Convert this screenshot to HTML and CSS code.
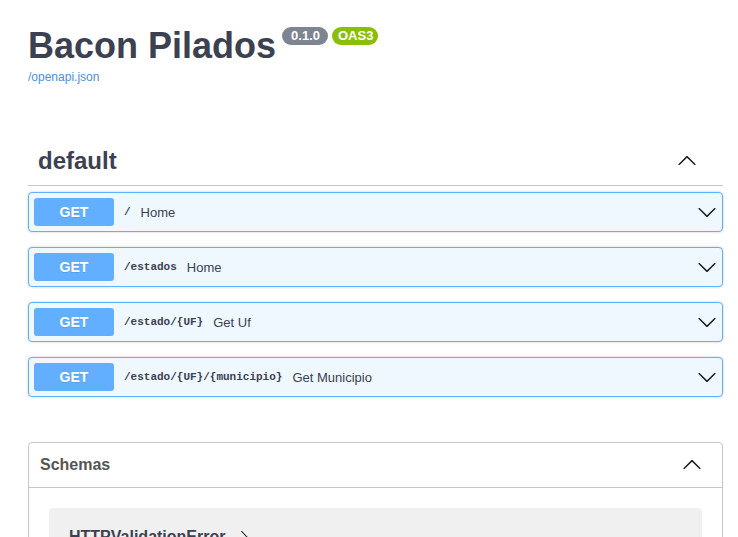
FILE: index.html
```html
<!DOCTYPE html>
<html lang="en">
<head>
<meta charset="utf-8">
<title>Bacon Pilados - Swagger UI</title>
<link rel="stylesheet" href="styles.css">
</head>
<body>
<div class="wrapper">
  <div class="info">
    <div class="title-row">
      <h2 class="title">Bacon Pilados</h2>
      <span class="badge badge-version">0.1.0</span>
      <span class="badge badge-oas">OAS3</span>
    </div>
    <a class="spec-link" href="#">/openapi.json</a>
  </div>

  <div class="tag-section">
    <h3 class="tag-heading">
      <span>default</span>
      <svg class="icon" width="20" height="20" viewBox="0 0 20 20"><path d="M2.582 13.891c-.272.268-.709.268-.979 0s-.271-.701 0-.969l7.908-7.83c.27-.268.707-.268.979 0l7.908 7.83c.27.268.27.701 0 .969-.271.268-.709.268-.979 0L10 6.75l-7.418 7.141z"/></svg>
    </h3>

    <div class="opblock">
      <span class="method">GET</span>
      <span class="path">/</span>
      <span class="desc">Home</span>
      <svg class="icon chevron" width="20" height="20" viewBox="0 0 20 20"><path d="M17.418 6.109c.272-.268.709-.268.979 0s.271.701 0 .969l-7.908 7.83c-.27.268-.707.268-.979 0l-7.908-7.83c-.27-.268-.27-.701 0-.969.271-.268.709-.268.979 0L10 13.25l7.418-7.141z"/></svg>
    </div>
    <div class="opblock">
      <span class="method">GET</span>
      <span class="path">/estados</span>
      <span class="desc">Home</span>
      <svg class="icon chevron" width="20" height="20" viewBox="0 0 20 20"><path d="M17.418 6.109c.272-.268.709-.268.979 0s.271.701 0 .969l-7.908 7.83c-.27.268-.707.268-.979 0l-7.908-7.83c-.27-.268-.27-.701 0-.969.271-.268.709-.268.979 0L10 13.25l7.418-7.141z"/></svg>
    </div>
    <div class="opblock">
      <span class="method">GET</span>
      <span class="path">/estado/{UF}</span>
      <span class="desc">Get Uf</span>
      <svg class="icon chevron" width="20" height="20" viewBox="0 0 20 20"><path d="M17.418 6.109c.272-.268.709-.268.979 0s.271.701 0 .969l-7.908 7.83c-.27.268-.707.268-.979 0l-7.908-7.83c-.27-.268-.27-.701 0-.969.271-.268.709-.268.979 0L10 13.25l7.418-7.141z"/></svg>
    </div>
    <div class="opblock">
      <span class="method">GET</span>
      <span class="path">/estado/{UF}/{municipio}</span>
      <span class="desc">Get Municipio</span>
      <svg class="icon chevron" width="20" height="20" viewBox="0 0 20 20"><path d="M17.418 6.109c.272-.268.709-.268.979 0s.271.701 0 .969l-7.908 7.83c-.27.268-.707.268-.979 0l-7.908-7.83c-.27-.268-.27-.701 0-.969.271-.268.709-.268.979 0L10 13.25l7.418-7.141z"/></svg>
    </div>
  </div>

  <section class="models">
    <h4 class="models-heading">
      <span>Schemas</span>
      <svg class="icon" width="20" height="20" viewBox="0 0 20 20"><path d="M2.582 13.891c-.272.268-.709.268-.979 0s-.271-.701 0-.969l7.908-7.83c.27-.268.707-.268.979 0l7.908 7.83c.27.268.27.701 0 .969-.271.268-.709.268-.979 0L10 6.75l-7.418 7.141z"/></svg>
    </h4>
    <div class="model-container">
      <span class="model-title">HTTPValidationError</span>
      <svg class="model-arrow" width="14" height="14" viewBox="0 0 20 20"><path d="M13.25 10L6.109 2.58c-.268-.27-.268-.707 0-.979.268-.27.701-.27.969 0l7.83 7.908c.268.271.268.709 0 .979l-7.83 7.908c-.268.271-.701.27-.969 0-.268-.269-.268-.707 0-.979L13.25 10z"/></svg>
    </div>
    <div class="model-container">
      <span class="model-title">ValidationError</span>
      <svg class="model-arrow" width="14" height="14" viewBox="0 0 20 20"><path d="M13.25 10L6.109 2.58c-.268-.27-.268-.707 0-.979.268-.27.701-.27.969 0l7.83 7.908c.268.271.268.709 0 .979l-7.830 7.908c-.268.271-.701.27-.969 0-.268-.269-.268-.707 0-.979L13.25 10z"/></svg>
    </div>
  </section>
</div>
</body>
</html>
```
FILE: styles.css
```css
* {
  box-sizing: border-box;
}

body {
  margin: 0;
  background: #ffffff;
  font-family: "Liberation Sans", Arial, sans-serif;
  color: #3b4151;
}

.wrapper {
  width: 695px;
  margin-left: 28px;
  padding-bottom: 40px;
}

.info {
  padding-top: 28px;
}

.title-row {
  display: flex;
  align-items: flex-start;
}

.title {
  margin: 0;
  font-size: 36px;
  line-height: 36px;
  font-weight: 700;
  color: #3b4151;
}

.badge {
  margin-top: -1px;
  height: 18px;
  line-height: 18px;
  font-size: 13px;
  font-weight: 700;
  color: #ffffff;
  border-radius: 57px;
}

.badge-version {
  margin-left: 6px;
  padding: 0 8px 0 9px;
  background: #7d8492;
}

.badge-oas {
  margin-left: 4px;
  padding: 0 5px 0 6px;
  background: #89bf04;
}

.spec-link {
  display: block;
  margin-top: 6px;
  font-size: 12px;
  line-height: 14px;
  color: #4990e2;
  text-decoration: none;
}

.tag-section {
  margin-top: 52px;
  padding-bottom: 1px;
}

.tag-heading {
  display: flex;
  align-items: center;
  justify-content: space-between;
  box-sizing: content-box;
  height: 49px;
  margin: 0 0 6px;
  padding: 0 26px 0 10px;
  border-bottom: 1px solid #c4c6cb;
  font-size: 24px;
  font-weight: 700;
  color: #3b4151;
}

.icon {
  display: block;
  flex: none;
  fill: #1b1b1b;
}

.opblock {
  display: flex;
  align-items: center;
  height: 40px;
  margin-bottom: 15px;
  padding: 0 5px;
  background: #eff7ff;
  border: 1px solid #61affe;
  border-radius: 4px;
  box-shadow: 0 0 3px rgba(0, 0, 0, 0.19);
}

.method {
  width: 80px;
  padding: 6px 0;
  line-height: 16px;
  text-align: center;
  font-size: 14px;
  font-weight: 700;
  color: #ffffff;
  background: #61affe;
  border-radius: 3px;
  text-shadow: 0 1px 0 rgba(0, 0, 0, 0.1);
}

.path {
  padding: 0 10px;
  font-family: "Liberation Mono", "DejaVu Sans Mono", monospace;
  font-size: 11px;
  font-weight: 700;
  color: #3b4151;
}

.desc {
  font-size: 13px;
  color: #3b4151;
}

.chevron {
  margin-left: auto;
}

.models {
  margin-top: 29px;
  border: 1px solid #c4c6cb;
  border-radius: 4px;
}

.models-heading {
  display: flex;
  align-items: center;
  justify-content: space-between;
  height: 45px;
  margin: 0;
  padding: 0 20px 0 11px;
  border-bottom: 1px solid #c4c6cb;
  font-size: 16px;
  font-weight: 700;
  color: #555555;
}

.model-container {
  display: flex;
  align-items: center;
  margin: 20px 20px 15px;
  padding: 20px 20px;
  background: #f0f0f0;
  border-radius: 4px;
}

.model-title {
  font-size: 16px;
  font-weight: 700;
  color: #3b4151;
}

.model-arrow {
  margin-left: 12px;
  fill: #1b1b1b;
}
```
